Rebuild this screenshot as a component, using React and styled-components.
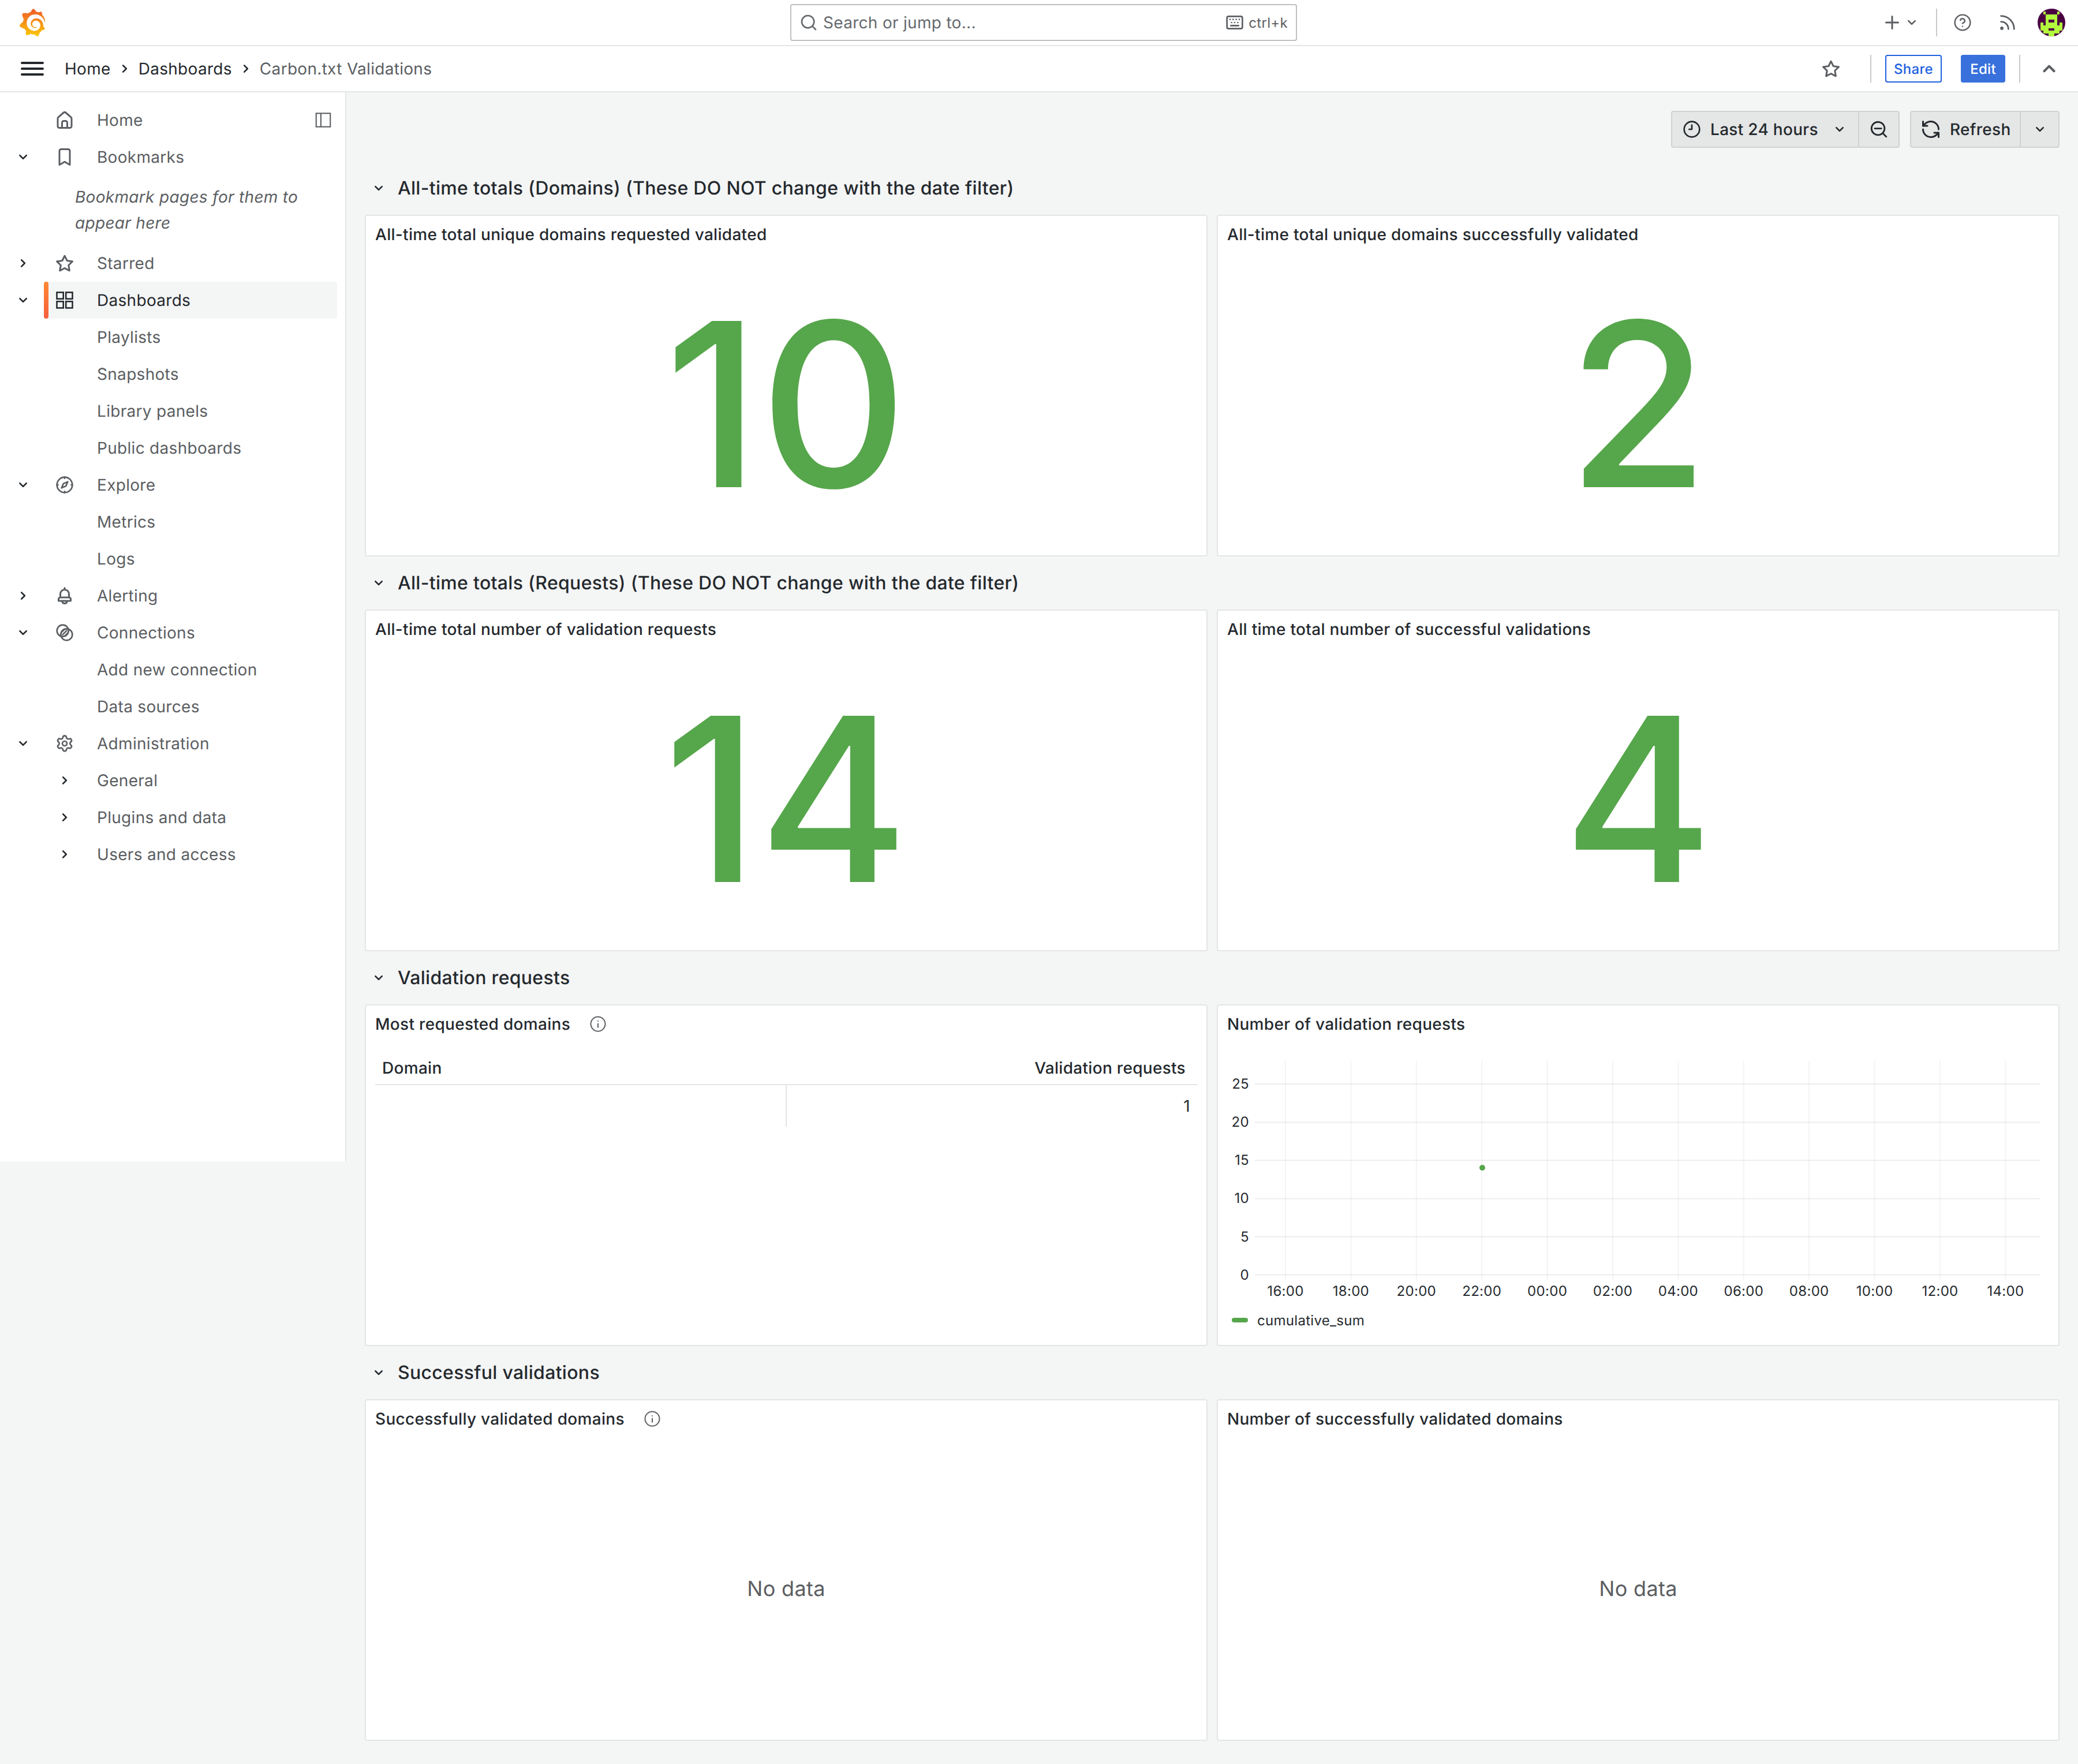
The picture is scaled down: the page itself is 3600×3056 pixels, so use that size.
import styled, { createGlobalStyle } from 'styled-components'
import { Settings, Keyboard, CircleHelp, Rss, RefreshCcw } from 'lucide-react'
import { SiGrafana } from 'react-icons/si'

const GlobalStyle = createGlobalStyle`
  html, body {
    margin: 0;
    padding: 0;
    background: #f4f5f5;
  }
  body {
    font-family: Inter, "Noto Sans", sans-serif;
    font-size: 28px;
    color: #24292e;
    letter-spacing: 0.3px;
    text-rendering: geometricPrecision;
  }
  * {
    box-sizing: border-box;
  }
`

const Page = styled.div`
  width: 3600px;
  min-height: 3056px;
  display: flex;
  flex-direction: column;
`

const Bar = styled.header`
  height: 80px;
  flex: none;
  display: flex;
  align-items: center;
  background: #fff;
  border-bottom: 2px solid #e4e5e6;
`

const LogoSlot = styled.div`
  width: 1369px;
  padding-left: 32px;
  display: flex;
  align-items: center;
`

const Logo = styled(SiGrafana)`
  width: 48px;
  height: 48px;
`

const Search = styled.div`
  width: 878px;
  height: 64px;
  display: flex;
  align-items: center;
  padding: 0 14px 0 14px;
  border: 2px solid #bdbfc0;
  border-radius: 4px;
  color: #666a6e;
  gap: 9px;
`

const Hint = styled.span`
  margin-left: auto;
  display: flex;
  align-items: center;
  gap: 8px;
  font-size: 24px;
  color: #5b5e62;
`

const TopActions = styled.div`
  flex: 1;
  display: flex;
  align-items: center;
  justify-content: flex-end;
  padding-right: 22px;
  color: #5b5e62;
`

const Divider = styled.span`
  width: 2px;
  height: 48px;
  background: #c8cacb;
  margin-left: ${({ $ml }) => $ml}px;
  margin-right: ${({ $mr }) => $mr}px;
`

const IconSlot = styled.span`
  width: ${({ $w }) => $w || 64}px;
  margin-left: ${({ $ml }) => $ml || 0}px;
  display: flex;
  align-items: center;
  justify-content: center;
  flex: none;
`

const AvatarWrap = styled.span`
  width: 48px;
  height: 48px;
  margin-left: 20px;
  border-radius: 50%;
  overflow: hidden;
  display: block;
`

const Crumbs = styled.nav`
  display: flex;
  align-items: center;
  gap: 8px;
  margin-left: 32px;
  flex: 1;
`

const Crumb = styled.span`
  color: ${({ $current }) => ($current ? '#5b5e62' : '#24292e')};
`

const Hamburger = styled.span`
  display: flex;
  margin-right: 24px;
  color: #24292e;
`

const SubActions = styled.div`
  display: flex;
  align-items: center;
  padding-right: 26px;
  color: #5b5e62;
`

const SmallButton = styled.span`
  height: 48px;
  width: ${({ $w }) => $w}px;
  margin-right: ${({ $mr }) => $mr}px;
  display: flex;
  align-items: center;
  justify-content: center;
  font-size: 24px;
  font-weight: 500;
  border-radius: 4px;
  border: 2px solid ${({ $solid }) => ($solid ? '#3871dc' : '#1f62e0')};
  background: ${({ $solid }) => ($solid ? '#3871dc' : '#fff')};
  color: ${({ $solid }) => ($solid ? '#fff' : '#1f62e0')};
`

const Body = styled.div`
  flex: 1;
  display: flex;
  align-items: flex-start;
`

const Sidebar = styled.aside`
  width: 600px;
  height: 1852px;
  flex: none;
  background: #fff;
  border-right: 2px solid #e4e5e6;
  padding-top: 16px;
  color: #5b5e62;
`

const NavRow = styled.div`
  height: 64px;
  display: flex;
  align-items: center;
  padding-left: 16px;
`

const Caret = styled.span`
  width: 48px;
  margin-right: 12px;
  display: flex;
  justify-content: center;
  color: #24292e;
  flex: none;
`

const NavItem = styled.div`
  position: relative;
  width: 508px;
  height: 64px;
  display: flex;
  align-items: center;
  border-radius: 4px;
  background: ${({ $active }) => ($active ? '#f4f5f5' : 'transparent')};
  color: ${({ $active }) => ($active ? '#24292e' : '#5b5e62')};
  ${({ $active }) =>
    $active &&
    `
    &::before {
      content: '';
      position: absolute;
      left: 0;
      top: 0;
      bottom: 0;
      width: 8px;
      border-radius: 4px;
      background: linear-gradient(0deg, #f55f3e, #ff8833);
    }
  `}
`

const NavIcon = styled.span`
  width: 72px;
  margin-right: 20px;
  display: flex;
  justify-content: center;
  flex: none;
  color: ${({ $dark }) => ($dark ? '#24292e' : '#5b5e62')};
`

const DockButton = styled.span`
  margin-left: auto;
  margin-right: 10px;
  display: flex;
`

const EmptyBookmarks = styled.div`
  height: 120px;
  padding-left: 130px;
  display: flex;
  align-items: center;
  font-style: italic;
  line-height: 45px;
`

const EmptyText = styled.p`
  margin: 0;
  width: 400px;
`

const Content = styled.main`
  flex: 1;
  padding: 32px 32px 40px;
`

const TimeBar = styled.div`
  display: flex;
  justify-content: flex-end;
  gap: 18px;
  margin-bottom: 40px;
`

const Group = styled.div`
  display: flex;
`

const ToolButton = styled.div`
  width: ${({ $w }) => $w}px;
  height: 64px;
  display: flex;
  align-items: center;
  padding-left: ${({ $pl }) => $pl || 0}px;
  justify-content: ${({ $center }) => ($center ? 'center' : 'flex-start')};
  gap: ${({ $gap }) => $gap || 16}px;
  background: #e5e6e6;
  border: 2px solid #cfd1d2;
  border-left-width: ${({ $joined }) => ($joined ? 0 : 2)}px;
  border-radius: ${({ $joined }) => ($joined ? '0 4px 4px 0' : '4px 0 0 4px')};
  font-weight: 500;
`

const Push = styled.span`
  margin-left: auto;
  margin-right: 16px;
  display: flex;
`

const Section = styled.section`
  margin-bottom: 16px;
`

const RowHeader = styled.div`
  height: 60px;
  margin-bottom: 16px;
  display: flex;
  align-items: center;
  gap: 17px;
  padding: 0 0 1px 8px;
  font-size: 32px;
  font-weight: 500;
`

const PanelGrid = styled.div`
  display: grid;
  grid-template-columns: 1fr 1fr;
  gap: 16px;
`

const Panel = styled.article`
  height: 592px;
  display: flex;
  flex-direction: column;
  background: #fff;
  border: 2px solid #e4e5e6;
  border-radius: 4px;
`

const PanelTitle = styled.h2`
  height: 64px;
  flex: none;
  margin: 0;
  padding-left: 16px;
  display: flex;
  align-items: center;
  gap: 33px;
  font-size: 28px;
  font-weight: 480;
  letter-spacing: 0.3px;
`

const InfoIcon = styled.span`
  display: flex;
  color: #5b5e62;
`

const Center = styled.div`
  flex: 1;
  display: flex;
  align-items: center;
  justify-content: center;
`

const BigValue = styled.span`
  font-size: 396px;
  font-weight: 500;
  line-height: 1;
  letter-spacing: 0;
  color: #56a64b;
`

const NoData = styled.span`
  font-size: 36px;
  color: #5b5e62;
`

const Table = styled.div`
  margin: 0 15px 0 16px;
`

const TableHead = styled.div`
  margin-top: 16px;
  height: 58px;
  display: flex;
  align-items: center;
  justify-content: space-between;
  padding: 0 21px 0 12px;
  border-bottom: 2px solid #e4e5e6;
  font-weight: 480;
`

const TableRow = styled.div`
  display: grid;
  grid-template-columns: 711px 1fr;
  height: 72px;
`

const Cell = styled.div`
  display: flex;
  align-items: center;
  justify-content: flex-end;
  padding-right: 13px;
  border-left: 2px solid #e4e5e6;
  grid-column: 2;
`

const ChartSvg = styled.svg`
  display: block;
  flex: none;
  width: 1456px;
  height: 456px;
  font-family: Inter, "Noto Sans", sans-serif;
  font-size: 24px;
  fill: #24292e;
`

const Legend = styled.div`
  height: 50px;
  padding-left: 24px;
  display: flex;
  align-items: center;
  gap: 16px;
  font-size: 24px;
`

const Swatch = styled.span`
  width: 28px;
  height: 8px;
  border-radius: 4px;
  background: #56a64b;
`

const Svg = styled.svg`
  width: ${({ $size }) => $size}px;
  height: ${({ $size }) => $size}px;
  flex: none;
  fill: currentColor;
  display: block;
`

const line = { fill: 'none', stroke: 'currentColor', strokeWidth: 2, strokeLinecap: 'round', strokeLinejoin: 'round' }

const paths = {
  home: <path d="M20,8h0L14,2.74a3,3,0,0,0-4,0L4,8a3,3,0,0,0-1,2.26V19a3,3,0,0,0,3,3H18a3,3,0,0,0,3-3V10.25A3,3,0,0,0,20,8ZM14,20H10V15a1,1,0,0,1,1-1h2a1,1,0,0,1,1,1Zm5-1a1,1,0,0,1-1,1H16V15a3,3,0,0,0-3-3H11a3,3,0,0,0-3,3v5H6a1,1,0,0,1-1-1V10.25a1,1,0,0,1,.34-.75l6-5.25a1,1,0,0,1,1.32,0l6,5.25a1,1,0,0,1,.34.75Z" />,
  bookmark: <path d="M16,2H8A3,3,0,0,0,5,5V21a1,1,0,0,0,.5.87,1,1,0,0,0,1,0L12,18.69l5.5,3.18A1,1,0,0,0,18,22a1,1,0,0,0,.5-.13A1,1,0,0,0,19,21V5A3,3,0,0,0,16,2Zm1,17.27-4.5-2.6a1,1,0,0,0-1,0L7,19.27V5A1,1,0,0,1,8,4h8a1,1,0,0,1,1,1Z" />,
  star: <path d="M22,9.67A1,1,0,0,0,21.14,9l-5.69-.83L12.9,3a1,1,0,0,0-1.8,0L8.55,8.16,2.86,9a1,1,0,0,0-.81.68,1,1,0,0,0,.25,1l4.13,4-1,5.68A1,1,0,0,0,6.9,21.44L12,18.77l5.1,2.67a.93.93,0,0,0,.46.12,1,1,0,0,0,.59-.19,1,1,0,0,0,.4-1l-1-5.68,4.13-4A1,1,0,0,0,22,9.67Zm-6.15,4a1,1,0,0,0-.29.88l.72,4.2-3.76-2a1.06,1.06,0,0,0-.94,0l-3.76,2,.72-4.2a1,1,0,0,0-.29-.88l-3-3,4.21-.61a1,1,0,0,0,.76-.55L12,5.7l1.88,3.82a1,1,0,0,0,.76.55l4.21.61Z" />,
  apps: (
    <g {...line} strokeLinejoin="miter" strokeWidth="1.700">
      <rect x="3" y="3" width="7.5" height="7.5" />
      <rect x="13.5" y="3" width="7.5" height="7.5" />
      <rect x="3" y="13.5" width="7.5" height="7.5" />
      <rect x="13.5" y="13.5" width="7.5" height="7.5" />
    </g>
  ),
  compass: (
    <g {...line}>
      <circle cx="12" cy="12" r="10" />
      <path d="M16 8l-2.4 5.6L8 16l2.4-5.6z" />
      <path d="M12 2v1.5M12 20.500v1.500M2 12h1.500M20.500 12H22" />
    </g>
  ),
  bell: <path d="M18,13.18V10a6,6,0,0,0-5-5.91V3a1,1,0,0,0-2,0V4.09A6,6,0,0,0,6,10v3.18A3,3,0,0,0,4,16v2a1,1,0,0,0,1,1H8.14a4,4,0,0,0,7.72,0H19a1,1,0,0,0,1-1V16A3,3,0,0,0,18,13.18ZM8,10a4,4,0,0,1,8,0v3H8Zm4,10a2,2,0,0,1-1.72-1h3.44A2,2,0,0,1,12,20Zm6-3H6V16a1,1,0,0,1,1-1H17a1,1,0,0,1,1,1Z" />,
  link: (
    <g {...line}>
      <circle cx="9.5" cy="9.500" r="7.500" />
      <circle cx="14.500" cy="14.500" r="7.500" />
      <path d="M9.500 14.500l5-5M8 11.500l3.500-3.500M12.500 16l3.500-3.500" />
    </g>
  ),
  search: <path d="M21.71,20.29,18,16.61A9,9,0,1,0,16.61,18l3.68,3.68a1,1,0,0,0,1.42,0A1,1,0,0,0,21.71,20.29ZM11,18a7,7,0,1,1,7-7A7,7,0,0,1,11,18Z" />,
  zoomOut: (
    <>
      <path d="M21.71,20.29,18,16.61A9,9,0,1,0,16.61,18l3.68,3.68a1,1,0,0,0,1.42,0A1,1,0,0,0,21.71,20.29ZM11,18a7,7,0,1,1,7-7A7,7,0,0,1,11,18Z" />
      <path d="M7 10h8a1 1 0 0 1 0 2H7a1 1 0 0 1 0-2z" />
    </>
  ),
  clock: (
    <g {...line}>
      <circle cx="12" cy="12" r="10" />
      <path d="M12 6.500V12H8.500" />
    </g>
  ),
  down: <path d="M17,9.17a1,1,0,0,0-1.41,0L12,12.71,8.46,9.17a1,1,0,0,0-1.41,0,1,1,0,0,0,0,1.42l4.24,4.24a1,1,0,0,0,1.42,0L17,10.59A1,1,0,0,0,17,9.17Z" />,
  right: <path d="M14.83,11.29,10.59,7.05a1,1,0,0,0-1.42,0,1,1,0,0,0,0,1.41L12.71,12,9.17,15.54a1,1,0,0,0,0,1.41,1,1,0,0,0,.71.29,1,1,0,0,0,.71-.29l4.24-4.24A1,1,0,0,0,14.83,11.29Z" />,
  up: <path d="M17,13.41,12.71,9.17a1,1,0,0,0-1.42,0L7.05,13.41a1,1,0,0,0,0,1.42,1,1,0,0,0,1.41,0L12,11.29l3.54,3.54a1,1,0,0,0,.7.29,1,1,0,0,0,.71-.29A1,1,0,0,0,17,13.41Z" />,
  plus: <path d="M19,11H13V5a1,1,0,0,0-2,0v6H5a1,1,0,0,0,0,2h6v6a1,1,0,0,0,2,0V13h6a1,1,0,0,0,0-2Z" />,
  bars: <path d="M3,8H21a1,1,0,0,0,0-2H3A1,1,0,0,0,3,8Zm18,8H3a1,1,0,0,0,0,2H21a1,1,0,0,0,0-2Zm0-5H3a1,1,0,0,0,0,2H21a1,1,0,0,0,0-2Z" />,
  info: (
    <g {...line} strokeWidth="1.600">
      <circle cx="12" cy="12" r="10" />
      <path d="M12 11.500V16.500M12 7.800v.2" />
    </g>
  ),
  dock: (
    <g {...line} strokeLinecap="butt" strokeLinejoin="miter" strokeWidth="1.800">
      <rect x="1.500" y="2" width="21" height="20" />
      <path d="M8.500 2v20" />
    </g>
  ),
}

const Icon = ({ name, size = 36 }) => (
  <Svg viewBox="0 0 24 24" $size={size}>
    {paths[name]}
  </Svg>
)

const avatarRows = [
  '..........',
  '..#....#..',
  '...####...',
  '...####...',
  '...#..#...',
  '.#.####.#.',
  '.########.',
  '.###..###.',
  '..######..',
  '....##....',
]

const Avatar = () => (
  <svg viewBox="0 0 10 10" width="48" height="48" shapeRendering="crispEdges">
    <rect width="10" height="10" fill="#4a0043" />
    {avatarRows.flatMap((row, y) =>
      row.split('').map((c, x) => (c === '#' ? <rect key={`${x}-${y}`} x={x} y={y} width="1" height="1" fill="#b2f83c" /> : null))
    )}
  </svg>
)

const yTicks = [0, 5, 10, 15, 20, 25]
const xTicks = ['16:00', '18:00', '20:00', '22:00', '00:00', '02:00', '04:00', '06:00', '08:00', '10:00', '12:00', '14:00']

const Chart = () => (
  <ChartSvg viewBox="0 0 1456 456">
    {xTicks.map((t, i) => {
      const x = 117 + 113.4 * i
      return (
        <g key={t}>
          <line x1={x} x2={x} y1="32" y2="411" stroke="#24292e" strokeOpacity="0.05" strokeWidth="2" />
          <text x={x} y="439" textAnchor="middle">{t}</text>
        </g>
      )
    })}
    {yTicks.map((t, i) => {
      const y = 402.6 - 66.1 * i
      return (
        <g key={t}>
          <line x1="64" x2="1425" y1={y} y2={y} stroke="#24292e" strokeOpacity="0.08" strokeWidth="2" />
          <text x="54" y={y + 8} textAnchor="end">{t}</text>
        </g>
      )
    })}
    <circle cx="458" cy="217" r="5" fill="#56a64b" />
  </ChartSvg>
)

const NavEntry = ({ icon, caret, active, dark, children, extra }) => (
  <NavRow>
    <Caret>{caret && <Icon name={caret} size={32} />}</Caret>
    <NavItem $active={active}>
      <NavIcon $dark={dark || active}>{icon}</NavIcon>
      {children}
      {extra}
    </NavItem>
  </NavRow>
)

const Row = ({ title, left, right }) => (
  <Section>
    <RowHeader>
      <Icon name="down" size={32} />
      {title}
    </RowHeader>
    <PanelGrid>
      {left}
      {right}
    </PanelGrid>
  </Section>
)

const StatPanel = ({ title, value }) => (
  <Panel>
    <PanelTitle>{title}</PanelTitle>
    <Center>
      <BigValue>{value}</BigValue>
    </Center>
  </Panel>
)

const EmptyPanel = ({ title, info }) => (
  <Panel>
    <PanelTitle>
      {title}
      {info && (
        <InfoIcon>
          <Icon name="info" size={30} />
        </InfoIcon>
      )}
    </PanelTitle>
    <Center>
      <NoData>No data</NoData>
    </Center>
  </Panel>
)

export default function App() {
  return (
    <Page>
      <GlobalStyle />
      <svg width="0" height="0">
        <defs>
          <linearGradient id="logoGradient" x1="0" y1="0" x2="0" y2="1">
            <stop offset="0" stopColor="#f05a28" />
            <stop offset="1" stopColor="#fbca0a" />
          </linearGradient>
        </defs>
      </svg>
      <Bar>
        <LogoSlot>
          <Logo fill="url(#logoGradient)" />
        </LogoSlot>
        <Search>
          <Icon name="search" size={32} />
          Search or jump to...
          <Hint>
            <Keyboard size={32} strokeWidth={2} />
            ctrl+k
          </Hint>
        </Search>
        <TopActions>
          <IconSlot $w={36}>
            <Icon name="plus" size={36} />
          </IconSlot>
          <IconSlot $w={32} $ml={0}>
            <Icon name="down" size={32} />
          </IconSlot>
          <Divider $ml={26} $mr={12} />
          <IconSlot>
            <CircleHelp size={32} strokeWidth={1.8} />
          </IconSlot>
          <IconSlot $ml={14}>
            <Rss size={34} strokeWidth={2} />
          </IconSlot>
          <AvatarWrap>
            <Avatar />
          </AvatarWrap>
        </TopActions>
      </Bar>
      <Bar>
        <Crumbs>
          <Hamburger>
            <Icon name="bars" size={48} />
          </Hamburger>
          <Crumb>Home</Crumb>
          <Icon name="right" size={32} />
          <Crumb>Dashboards</Crumb>
          <Icon name="right" size={32} />
          <Crumb $current>Carbon.txt Validations</Crumb>
        </Crumbs>
        <SubActions>
          <IconSlot $w={36}>
            <Icon name="star" size={36} />
          </IconSlot>
          <Divider $ml={50} $mr={24} />
          <SmallButton $w={98} $mr={33}>Share</SmallButton>
          <SmallButton $w={77} $mr={24} $solid>Edit</SmallButton>
          <Divider $ml={0} $mr={26} />
          <IconSlot $w={48}>
            <Icon name="up" size={48} />
          </IconSlot>
        </SubActions>
      </Bar>
      <Body>
        <Sidebar>
          <NavEntry
            icon={<Icon name="home" />}
            extra={
              <DockButton>
                <Icon name="dock" size={28} />
              </DockButton>
            }
          >
            Home
          </NavEntry>
          <NavEntry icon={<Icon name="bookmark" />} caret="down">Bookmarks</NavEntry>
          <EmptyBookmarks>
            <EmptyText>Bookmark pages for them to appear here</EmptyText>
          </EmptyBookmarks>
          <NavEntry icon={<Icon name="star" />} caret="right">Starred</NavEntry>
          <NavEntry icon={<Icon name="apps" />} caret="down" active>Dashboards</NavEntry>
          <NavEntry>Playlists</NavEntry>
          <NavEntry>Snapshots</NavEntry>
          <NavEntry>Library panels</NavEntry>
          <NavEntry>Public dashboards</NavEntry>
          <NavEntry icon={<Icon name="compass" size={32} />} caret="down">Explore</NavEntry>
          <NavEntry>Metrics</NavEntry>
          <NavEntry>Logs</NavEntry>
          <NavEntry icon={<Icon name="bell" />} caret="right">Alerting</NavEntry>
          <NavEntry icon={<Icon name="link" size={32} />} caret="down">Connections</NavEntry>
          <NavEntry>Add new connection</NavEntry>
          <NavEntry>Data sources</NavEntry>
          <NavEntry icon={<Settings size={32} strokeWidth={2} />} caret="down">Administration</NavEntry>
          <NavEntry icon={<Icon name="right" size={32} />} dark>General</NavEntry>
          <NavEntry icon={<Icon name="right" size={32} />} dark>Plugins and data</NavEntry>
          <NavEntry icon={<Icon name="right" size={32} />} dark>Users and access</NavEntry>
        </Sidebar>
        <Content>
          <TimeBar>
            <Group>
              <ToolButton $w={326} $pl={18}>
                <Icon name="clock" size={32} />
                Last 24 hours
                <Push>
                  <Icon name="down" size={32} />
                </Push>
              </ToolButton>
              <ToolButton $w={70} $center $joined>
                <Icon name="zoomOut" size={34} />
              </ToolButton>
            </Group>
            <Group>
              <ToolButton $w={192} $pl={16} $gap={15}>
                <RefreshCcw size={36} strokeWidth={2} />
                Refresh
              </ToolButton>
              <ToolButton $w={67} $center $joined>
                <Icon name="down" size={32} />
              </ToolButton>
            </Group>
          </TimeBar>
          <Row
            title="All-time totals (Domains) (These DO NOT change with the date filter)"
            left={<StatPanel title="All-time total unique domains requested validated" value="10" />}
            right={<StatPanel title="All-time total unique domains successfully validated" value="2" />}
          />
          <Row
            title="All-time totals (Requests) (These DO NOT change with the date filter)"
            left={<StatPanel title="All-time total number of validation requests" value="14" />}
            right={<StatPanel title="All time total number of successful validations" value="4" />}
          />
          <Row
            title="Validation requests"
            left={
              <Panel>
                <PanelTitle>
                  Most requested domains
                  <InfoIcon>
                    <Icon name="info" size={30} />
                  </InfoIcon>
                </PanelTitle>
                <Table>
                  <TableHead>
                    <span>Domain</span>
                    <span>Validation requests</span>
                  </TableHead>
                  <TableRow>
                    <Cell>1</Cell>
                  </TableRow>
                </Table>
              </Panel>
            }
            right={
              <Panel>
                <PanelTitle>Number of validation requests</PanelTitle>
                <Chart />
                <Legend>
                  <Swatch />
                  cumulative_sum
                </Legend>
              </Panel>
            }
          />
          <Row
            title="Successful validations"
            left={<EmptyPanel title="Successfully validated domains" info />}
            right={<EmptyPanel title="Number of successfully validated domains" />}
          />
        </Content>
      </Body>
    </Page>
  )
}
